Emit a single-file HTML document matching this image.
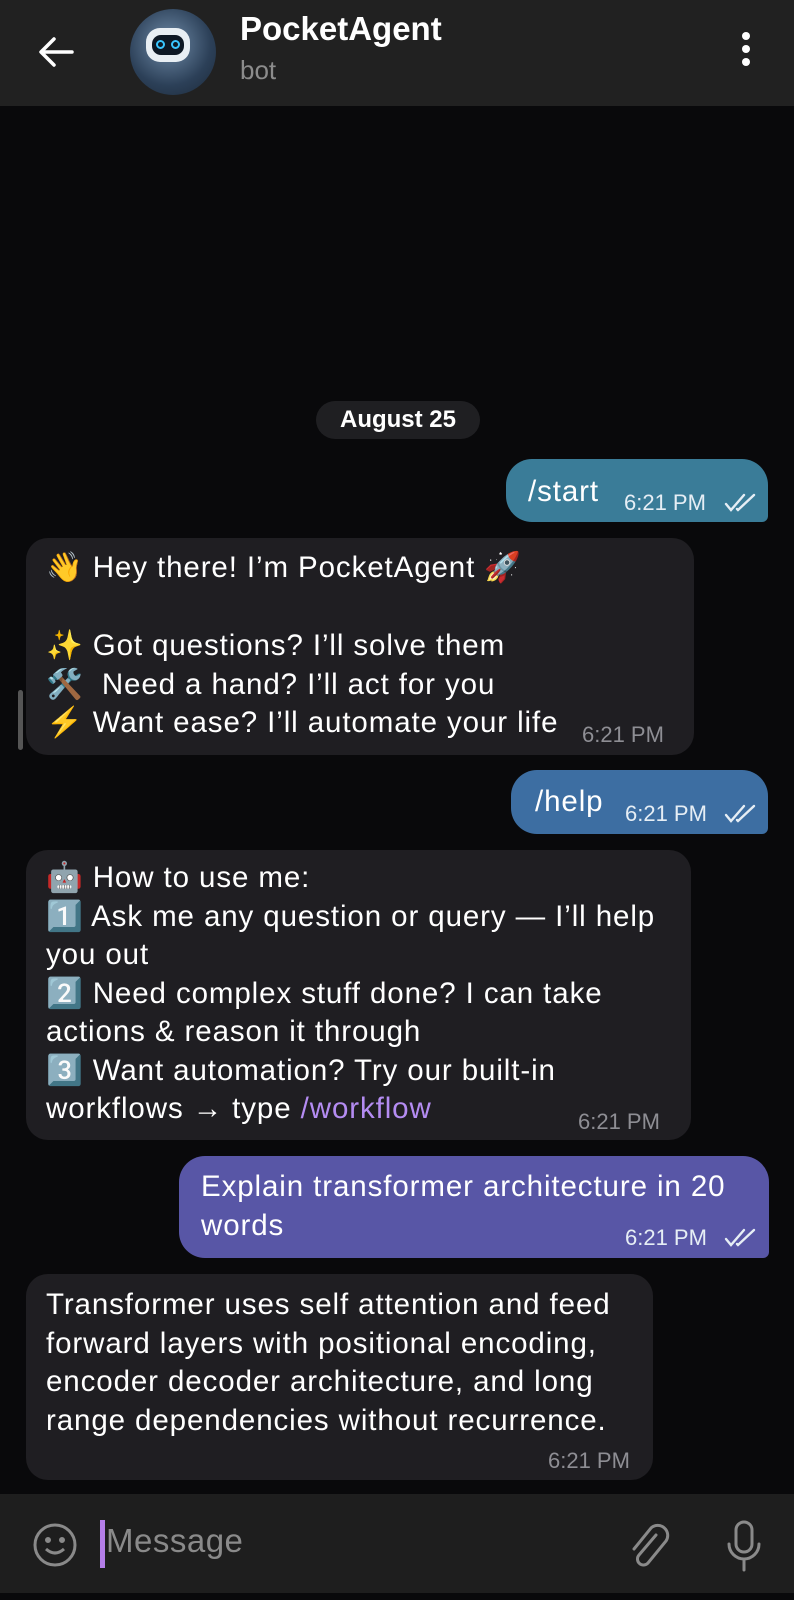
<!DOCTYPE html>
<html><head><meta charset="utf-8"><style>
*{margin:0;padding:0;box-sizing:border-box}
body{width:794px;height:1600px;background:#09090b;position:relative;overflow:hidden;font-family:"Liberation Sans","Noto Sans CJK SC",sans-serif;color:#fff}
.a{position:absolute;white-space:nowrap}
.hdr{position:absolute;left:0;top:0;width:794px;height:106px;background:#212121}
.bot{position:absolute;background:#1f1e22;border-radius:22px}
.t{font-size:29.5px;line-height:38.5px;letter-spacing:0.9px}
.tm{font-size:22px;color:#8e8e94}
.tu{font-size:22px;color:#e6eef5}
.inp{position:absolute;left:0;top:1494px;width:794px;height:99px;background:#1e1e1e}
</style></head><body>
<div class="hdr"></div>
<svg class="a" style="left:36px;top:34px" width="40" height="36" viewBox="0 0 40 36"><path d="M36 18H6M18 5L5 18l13 13" stroke="#fff" stroke-width="3.5" fill="none" stroke-linecap="round" stroke-linejoin="round"/></svg>
<div class="a" style="left:130px;top:9px;width:86px;height:86px;border-radius:50%;background:radial-gradient(circle at 45% 40%,#6f8ba8,#2c4058 60%,#1b2838)"></div>
<div class="a" style="left:146px;top:28px;width:44px;height:34px;border-radius:14px;background:#e8eef3"></div>
<div class="a" style="left:152px;top:35px;width:32px;height:20px;border-radius:9px;background:#0e1824"></div>
<div class="a" style="left:156px;top:40px;width:9px;height:9px;border-radius:50%;border:2px solid #39c6ff"></div>
<div class="a" style="left:171px;top:40px;width:9px;height:9px;border-radius:50%;border:2px solid #39c6ff"></div>
<div class="a" style="left:240px;top:10px;font-size:33px;font-weight:bold">PocketAgent</div>
<div class="a" style="left:240px;top:55px;font-size:26px;color:#8c8c8c">bot</div>
<div class="a" style="left:742px;top:32px;width:8px;height:8px;border-radius:50%;background:#fff;box-shadow:0 13px 0 #fff,0 26px 0 #fff"></div>

<div class="a" style="left:316px;top:401px;width:164px;height:38px;border-radius:19px;background:#1f1f22;font-size:24px;font-weight:bold;text-align:center;line-height:38px">August 25</div>

<div class="a" style="left:506px;top:459px;width:262px;height:63px;border-radius:26px 26px 6px 26px;background:#3a7c98"></div>
<div class="a t" style="left:528px;top:473px">/start</div>
<div class="a tu" style="left:624px;top:490px">6:21 PM</div>

<div class="bot" style="left:26px;top:538px;width:668px;height:217px"></div>
<div class="a t" style="left:46px;top:549px">👋 Hey there! I’m PocketAgent 🚀</div>
<div class="a t" style="left:46px;top:627px">✨ Got questions? I’ll solve them<br>🛠️ &nbsp;Need a hand? I’ll act for you<br>⚡ Want ease? I’ll automate your life</div>
<div class="a tm" style="left:582px;top:722px">6:21 PM</div>
<div class="a" style="left:18px;top:690px;width:5px;height:60px;border-radius:3px;background:#555"></div>

<div class="a" style="left:511px;top:770px;width:257px;height:64px;border-radius:26px 26px 6px 26px;background:#3d6ea2"></div>
<div class="a t" style="left:535px;top:783px">/help</div>
<div class="a tu" style="left:625px;top:801px">6:21 PM</div>

<div class="bot" style="left:26px;top:850px;width:665px;height:290px"></div>
<div class="a t" style="left:46px;top:859px">🤖 How to use me:<br>1️⃣ Ask me any question or query — I’ll help<br>you out<br>2️⃣ Need complex stuff done? I can take<br>actions &amp; reason it through<br>3️⃣ Want automation? Try our built-in<br>workflows → type <span style="color:#b48cf2">/workflow</span></div>
<div class="a tm" style="left:578px;top:1109px">6:21 PM</div>

<div class="a" style="left:179px;top:1156px;width:590px;height:102px;border-radius:26px 26px 6px 26px;background:#5856a6"></div>
<div class="a t" style="left:201px;top:1168px">Explain transformer architecture in 20<br>words</div>
<div class="a tu" style="left:625px;top:1225px">6:21 PM</div>

<div class="bot" style="left:26px;top:1274px;width:627px;height:206px"></div>
<div class="a t" style="left:46px;top:1286px">Transformer uses self attention and feed<br>forward layers with positional encoding,<br>encoder decoder architecture, and long<br>range dependencies without recurrence.</div>
<div class="a tm" style="left:548px;top:1448px">6:21 PM</div>

<svg class="a" style="left:724px;top:493px" width="34" height="20" viewBox="0 0 34 20" fill="none" stroke="#e6eef5" stroke-width="2.4" stroke-linecap="round"><path d="M2 11l5 6L20 2M13 16l1 1L30 2"/></svg>
<svg class="a" style="left:724px;top:804px" width="34" height="20" viewBox="0 0 34 20" fill="none" stroke="#e6eef5" stroke-width="2.4" stroke-linecap="round"><path d="M2 11l5 6L20 2M13 16l1 1L30 2"/></svg>
<svg class="a" style="left:724px;top:1228px" width="34" height="20" viewBox="0 0 34 20" fill="none" stroke="#e6eef5" stroke-width="2.4" stroke-linecap="round"><path d="M2 11l5 6L20 2M13 16l1 1L30 2"/></svg>

<div class="inp"></div>
<svg class="a" style="left:32px;top:1522px" width="46" height="46" viewBox="0 0 46 46" fill="none" stroke="#8a8a8a" stroke-width="3"><circle cx="23" cy="23" r="20"/><circle cx="16" cy="18" r="1.5" fill="#8a8a8a"/><circle cx="30" cy="18" r="1.5" fill="#8a8a8a"/><path d="M14 27q9 8 18 0"/></svg>
<div class="a" style="left:100px;top:1520px;width:5px;height:48px;background:#b47ee8"></div>
<div class="a" style="left:106px;top:1522px;font-size:33px;letter-spacing:0.5px;color:#8a8a8a">Message</div>
<svg class="a" style="left:626px;top:1521px" width="44" height="50" viewBox="0 0 44 50" fill="none" stroke="#8a8a8a" stroke-width="3" stroke-linecap="round"><path d="M30 14L13 34a6 6 0 0 0 9 8l18-22a10 10 0 0 0-15-13L8 28"/></svg>
<svg class="a" style="left:726px;top:1520px" width="36" height="52" viewBox="0 0 36 52" fill="none" stroke="#8a8a8a" stroke-width="3" stroke-linecap="round"><rect x="10" y="2" width="16" height="30" rx="8"/><path d="M3 24a15 15 0 0 0 30 0M18 39v11"/></svg>
</body></html>
